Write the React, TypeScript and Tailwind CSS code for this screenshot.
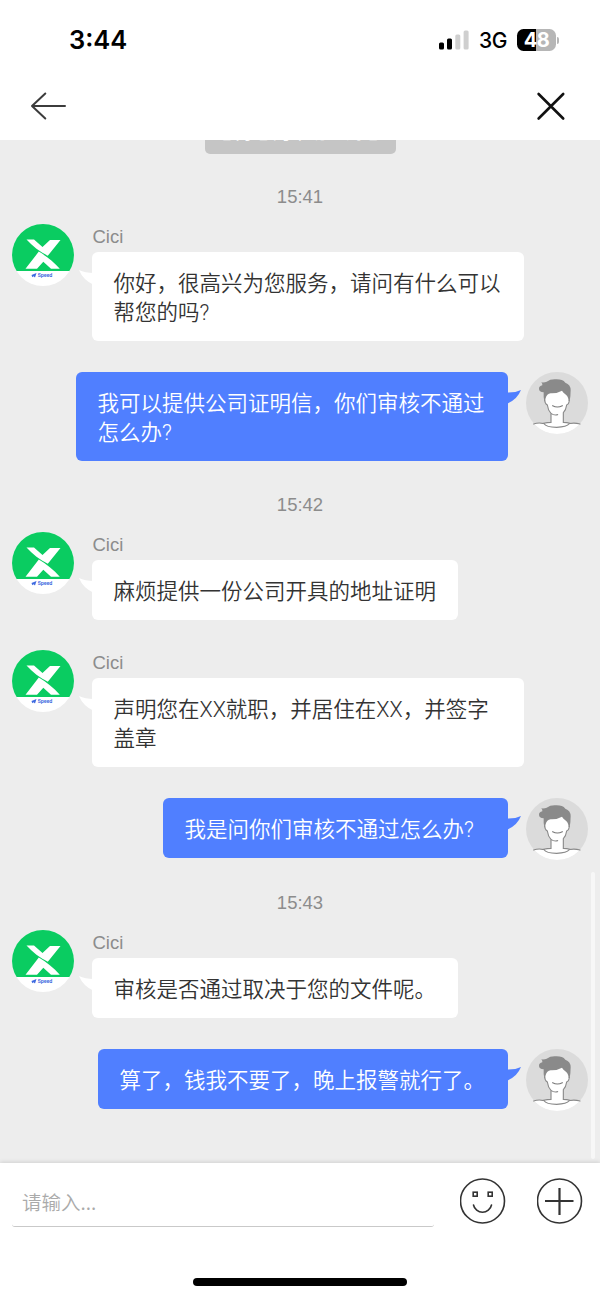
import React from "react";

interface Message {
    id: number;
    from: "agent" | "me";
    lines: string[];
    width: string;
    spacing: string;
}

interface MessageGroup {
    time: string;
    spacing: string;
    messages: Message[];
}

const groups: MessageGroup[] = [
    {
        time: "15:41",
        spacing: "mt-[31px]",
        messages: [
            { id: 1, from: "agent", lines: ["你好，很高兴为您服务，请问有什么可以", "帮您的吗?"], width: "w-[432px]", spacing: "mt-[15px]" },
            { id: 2, from: "me", lines: ["我可以提供公司证明信，你们审核不通过", "怎么办?"], width: "w-[432px]", spacing: "mt-[31px]" },
        ],
    },
    {
        time: "15:42",
        spacing: "mt-[32px]",
        messages: [
            { id: 3, from: "agent", lines: ["麻烦提供一份公司开具的地址证明"], width: "w-[366px]", spacing: "mt-[15px]" },
            { id: 4, from: "agent", lines: ["声明您在XX就职，并居住在XX，并签字", "盖章"], width: "w-[432px]", spacing: "mt-[30px]" },
            { id: 5, from: "me", lines: ["我是问你们审核不通过怎么办?"], width: "w-[345px]", spacing: "mt-[31px]" },
        ],
    },
    {
        time: "15:43",
        spacing: "mt-[31px]",
        messages: [
            { id: 6, from: "agent", lines: ["审核是否通过取决于您的文件呢。"], width: "w-[366px]", spacing: "mt-[15px]" },
            { id: 7, from: "me", lines: ["算了，钱我不要了，晚上报警就行了。"], width: "w-[410px]", spacing: "mt-[31px]" },
        ],
    },
];

const StatusBar = () => (
    <div className="flex h-[80px] items-center justify-between pl-[69px] pr-[41px]">
        <span className="font-[Inter,sans-serif] text-[25.5px] leading-8 font-semibold text-black">3:44</span>
        <div className="flex items-center">
            <svg width="30" height="20" viewBox="0 0 30 20">
                <rect x="0" y="12.5" width="5" height="7" rx="1.5" fill="#000" />
                <rect x="8" y="8.5" width="5" height="11" rx="1.5" fill="#000" />
                <rect x="16.3" y="4.5" width="5" height="15" rx="1.5" fill="#cfcfcf" />
                <rect x="24.6" y="0.5" width="5" height="19" rx="1.5" fill="#cfcfcf" />
            </svg>
            <span className="ml-[10px] w-[30px] pt-[2px] font-[Inter,sans-serif] text-[21px] leading-7 font-medium tracking-[-0.3px] text-black">3G</span>
            <div className="ml-[8px] flex h-[22px] w-[39px] items-center justify-center rounded-[6.5px] bg-[linear-gradient(90deg,#000_49%,#b6b6b6_49%)] font-[Inter,sans-serif] text-[20px] leading-none font-bold tracking-[-0.5px] text-white">
                48
            </div>
            <div className="ml-[1px] h-[7px] w-[2px] rounded-r-full bg-[#b6b6b6]" />
        </div>
    </div>
);

const NavBar = () => (
    <div className="flex h-[60px] items-start justify-between pt-[10px] pr-[34px] pl-[30px]">
        <svg width="38" height="32" viewBox="0 0 38 32" fill="none" stroke="#3c3c3c" strokeWidth="2" strokeLinecap="round" strokeLinejoin="round">
            <path d="M35 16H2M15.3 3.5L2 16l13.3 12.5" />
        </svg>
        <svg width="32" height="32" viewBox="0 0 32 32" fill="none" stroke="#111" strokeWidth="2.6" strokeLinecap="round">
            <path d="M4.6 4l24.6 24.5M29.2 4L4.6 28.5" />
        </svg>
    </div>
);

const AgentAvatar = () => (
    <svg className="shrink-0" width="62" height="62" viewBox="0 0 62 62">
        <defs>
            <clipPath id="agent-circle">
                <circle cx="31" cy="31" r="31" />
            </clipPath>
        </defs>
        <g clipPath="url(#agent-circle)">
            <rect width="62" height="62" fill="#fff" />
            <rect width="62" height="47" fill="#0acc61" />
        </g>
        <path d="M14.5 15.5H22L30.5 23L38 16H48.5L35.8 31.8C28 28 20.5 22 14.5 15.5Z" fill="#fff" />
        <path d="M26.8 27.6C34 32 42 38 47.8 44.7H39L31.3 37.8L25 44.7H13.5Z" fill="#fff" />
        <path d="M19.5 51L24.5 49L23 53.5L21.5 52.3L20.3 53.3Z" fill="#3f6be0" />
        <text x="25.8" y="53" fontSize="4.8" fontWeight="700" fontFamily="Inter, sans-serif" fill="#3f6be0" textLength="14.5">Speed</text>
    </svg>
);

const UserAvatar = () => (
    <svg className="shrink-0" width="62" height="62" viewBox="0 0 186 186">
        <defs>
            <clipPath id="user-circle">
                <circle cx="93" cy="93" r="93" />
            </clipPath>
        </defs>
        <g clipPath="url(#user-circle)">
            <rect width="186" height="186" fill="#dbdbdb" />
            <path d="M0 156H24Q45 152 75 150H112Q140 151 164 156H186V186H0Z" fill="#fff" />
        </g>
        <path d="M57 62Q70 50 92 52Q112 48 126 62L130 85Q129 97 122 99Q120 114 112 122V154H75V124Q65 113 64 99Q56 96 55 84Z" fill="#fff" />
        <path d="M23 156Q36 151 50 154Q65 151 75 151V124Q66 115 64 99Q57 96 56 84M130 84Q129 97 122 99Q120 114 112 122V151Q122 151 134 154Q148 152 162 156M75 124Q84 131 95 128M54 155Q60 165 92 166Q122 165 130 155" fill="none" stroke="#8a8a8a" strokeWidth="3.4" strokeLinecap="round" />
        <path d="M80 101Q94 109 109 101" fill="none" stroke="#777" strokeWidth="3.4" strokeLinecap="round" />
        <path d="M46 31Q56 32 62 29Q74 20 92 22Q110 22 118 32Q134 38 134 54Q134 72 131 87H128Q127 72 117 66Q111 62 108 56Q92 65 74 64Q62 66 59 78L57 88H55Q52 76 53 61Q39 60 39 50Q39 42 49 40Q50 35 46 31Z" fill="#8a8a8a" />
    </svg>
);

const BubbleText = ({ lines }: { lines: string[] }) => (
    <>
        {lines.map((line) => (
            <p key={line} className="whitespace-nowrap">
                {line}
            </p>
        ))}
    </>
);

const AgentMessage = ({ message }: { message: Message }) => (
    <div className={`flex items-start pl-3 ${message.spacing}`}>
        <AgentAvatar />
        <div className="ml-[18px]">
            <div className="mt-[1px] h-[27px] pl-[0.5px] font-['Liberation_Sans',sans-serif] text-[18.5px] leading-[24px] text-[#8c8c8c]">Cici</div>
            <div className={`relative rounded-[6px] bg-white px-[21.5px] pt-[17px] pb-[14px] text-[21.5px] leading-[29px] font-[350] text-[#333] ${message.width}`}>
                <svg className="absolute top-[18px] -left-[13px]" width="15" height="16" viewBox="0 0 15 16">
                    <path d="M0 0Q6 3 15 3V15Q4 10 0 0Z" fill="#fff" />
                </svg>
                <BubbleText lines={message.lines} />
            </div>
        </div>
    </div>
);

const UserMessage = ({ message }: { message: Message }) => (
    <div className={`flex items-start justify-end pr-3 ${message.spacing}`}>
        <div className={`relative mr-[18px] rounded-[6px] bg-[#507fff] px-[21.5px] pt-[17px] pb-[14px] text-[21.5px] leading-[29px] font-[350] text-white ${message.width}`}>
            <svg className="absolute top-[18px] -right-[13px]" width="15" height="16" viewBox="0 0 15 16">
                <path d="M15 0Q9 3 0 2.5V14Q11 10 15 0Z" fill="#507fff" />
            </svg>
            <BubbleText lines={message.lines} />
        </div>
        <UserAvatar />
    </div>
);

const InputBar = () => (
    <footer className="relative flex h-[135px] shrink-0 flex-col bg-white shadow-[0_-1px_4px_rgba(0,0,0,0.12)]">
        <div className="flex items-start pl-3">
            <div className="mt-[14px] flex h-[50px] w-[422px] shrink-0 items-center rounded-[3px] border-b-[1.5px] border-[#c9c9c9] pl-[10px] font-['Noto_Sans_CJK_SC',sans-serif] text-[19.5px] font-[350] text-[#aaa]">
                请输入...
            </div>
            <svg className="mt-[14px] ml-[26px] shrink-0" width="48" height="48" viewBox="0 0 48 48" fill="none" stroke="#333" strokeWidth="1.6">
                <circle cx="22.5" cy="24" r="22" />
                <rect x="13.2" y="15.2" width="4" height="4" />
                <rect x="28.2" y="15.2" width="4" height="4" />
                <path d="M13.5 28A9.2 9.2 0 0 0 31.5 28" strokeLinecap="round" />
            </svg>
            <svg className="mt-[14px] ml-[29px] shrink-0" width="48" height="48" viewBox="0 0 48 48" fill="none" stroke="#333" strokeWidth="1.6">
                <circle cx="22.5" cy="24" r="22" />
                <path d="M8 24H36.5M22.5 11V38" strokeWidth="2.2" />
            </svg>
        </div>
        <div className="mt-auto mb-[12px] ml-[193px] h-[8px] w-[214px] rounded-full bg-black" />
    </footer>
);

const App = () => {
    return (
        <div className="flex h-[1298px] w-[600px] flex-col overflow-hidden bg-white font-[Roboto,'Noto_Sans_CJK_SC',sans-serif]">
            <header className="h-[140px] shrink-0 bg-white">
                <StatusBar />
                <NavBar />
            </header>

            <main className="relative h-[1023px] shrink-0 overflow-hidden bg-[#ededed]">
                <div className="flex h-[14px] items-end justify-center overflow-hidden">
                    <div className="h-[36px] w-[191px] shrink-0 rounded-[5px] bg-[#c5c5c5] pt-[5px] text-center text-[18.3px] leading-[20px] whitespace-nowrap text-white">
                        您好您的来访一对您
                    </div>
                </div>

                {groups.map((group) => (
                    <section key={group.time}>
                        <div className={`h-[24px] text-center font-['Liberation_Sans',sans-serif] text-[18.5px] leading-[24px] text-[#8c8c8c] ${group.spacing}`}>
                            {group.time}
                        </div>
                        {group.messages.map((message) =>
                            message.from === "agent" ? (
                                <AgentMessage key={message.id} message={message} />
                            ) : (
                                <UserMessage key={message.id} message={message} />
                            )
                        )}
                    </section>
                ))}

                <div className="absolute top-[732px] right-[5px] h-[287px] w-[4px] rounded-full bg-[#f7f7f7]" />
            </main>

            <InputBar />
        </div>
    );
};

export default App;
